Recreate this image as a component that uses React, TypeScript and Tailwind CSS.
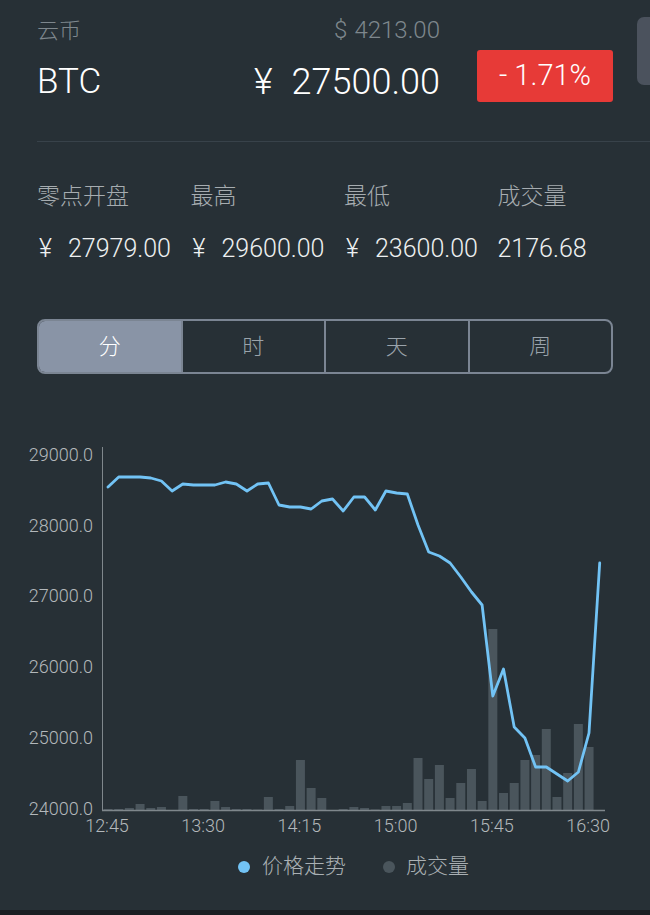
const prices = [
  487, 477, 477, 477, 478, 481, 491, 484, 485, 485, 485, 482, 484, 491, 484, 483,
  505, 507, 507, 509, 501, 499, 511, 497, 497, 510, 491, 493, 494, 525, 552, 556,
  563, 577, 592, 605, 696, 669, 727, 738, 767, 767, 774, 781, 772, 733, 563,
];

const volumes = [
  1, 1, 2, 6, 2, 3, 0, 14, 1, 1, 9, 3, 1, 1, 0.5, 13, 1, 4, 50, 22, 12, 0, 1, 3,
  2, 0.5, 4, 4, 7, 52, 31, 45, 12, 27, 41, 9, 181, 17, 27, 50, 55, 81, 13, 37, 86,
  63, 0,
];

const stats = [
  { label: "零点开盘", value: "27979.00", yen: true },
  { label: "最高", value: "29600.00", yen: true },
  { label: "最低", value: "23600.00", yen: true },
  { label: "成交量", value: "2176.68", yen: false },
];

const tabs = ["分", "时", "天", "周"];

const yTicks = [29000, 28000, 27000, 26000, 25000, 24000];
const xTicks = ["12:45", "13:30", "14:15", "15:00", "15:45", "16:30"];

const STEP = 10.69;
const X0 = 108;
// chart svg starts at y=440 of the page
const OFF = 440;

function PriceChart() {
  const pts = prices
    .map((y, i) => `${(X0 + i * STEP).toFixed(1)},${y - OFF}`)
    .join(" ");

  return (
    <svg width={650} height={395} className="block">
      {volumes.map((h, i) =>
        h > 0 ? (
          <rect
            key={i}
            x={X0 + i * STEP - 4.5}
            y={370 - h}
            width={9}
            height={h}
            fill="#4a555c"
          />
        ) : null
      )}
      <line x1={102.5} y1={7} x2={102.5} y2={371} stroke="#7f878c" strokeWidth={1} />
      <line x1={102} y1={370.5} x2={605} y2={370.5} stroke="#7f878c" strokeWidth={1.5} />
      <polyline
        points={pts}
        fill="none"
        stroke="#72c3f5"
        strokeWidth={2.8}
        strokeLinejoin="round"
        strokeLinecap="round"
      />
      {yTicks.map((v) => (
        <text
          key={v}
          x={93}
          y={370 - (v - 24000) * 0.0708}
          textAnchor="end"
          dominantBaseline="middle"
          fill="#b3b8bb"
          fontSize={18}
        >
          {v.toFixed(1)}
        </text>
      ))}
      {xTicks.map((t, i) => (
        <text
          key={t}
          x={X0 + i * 9 * STEP - 1}
          y={387}
          textAnchor="middle"
          dominantBaseline="middle"
          fill="#b3b8bb"
          fontSize={18}
        >
          {t}
        </text>
      ))}
    </svg>
  );
}

export default function App() {
  return (
    <div className="relative flex h-[915px] w-[650px] flex-col overflow-hidden bg-[#273036] font-['Roboto','Noto_Sans_CJK_SC',sans-serif] font-light">
      {/* side handle peeking in at the top right */}
      <div className="absolute right-0 top-[17px] h-[68px] w-[13px] rounded-l-[7px] bg-[#4b525d]" />

      <div className="flex h-[141px] pl-[37px] pt-[14px]">
        <div className="flex w-[403px] flex-col">
          <div className="flex h-[32px] items-center justify-between">
            <span className="text-[22px] text-[#7e878d]">云币</span>
            <span className="text-[24px] text-[#7e878d]">
              <span className="mr-[7px]">$</span>4213.00
            </span>
          </div>
          <div className="mt-[11px] flex h-[50px] items-center justify-between">
            <span className="text-[35px] text-white">BTC</span>
            <span className="text-[36px] text-white">
              <span className="mr-[19px]">¥</span>27500.00
            </span>
          </div>
        </div>
        <div className="ml-[37px] mt-[36px] flex h-[52px] w-[136px] items-center justify-center rounded-[3px] bg-[#e73a37] text-[29px] text-white">
          - 1.71%
        </div>
      </div>
      <div className="ml-[37px] h-px bg-[#38424a]" />

      <div className="mt-[40px] grid w-[651px] grid-cols-4 pl-[37px]">
        {stats.map((s) => (
          <div key={s.label} className="flex h-[30px] items-center text-[23px] text-[#a6acb0]">
            {s.label}
          </div>
        ))}
      </div>
      <div className="mt-[22px] grid w-[651px] grid-cols-4 pl-[37px]">
        {stats.map((s) => (
          <div key={s.label} className="flex h-[30px] items-center text-[25px] text-[#eef0f1]">
            {s.yen && <span className="ml-[2px] mr-[16px]">¥</span>}
            {s.value}
          </div>
        ))}
      </div>

      <div className="ml-[37px] mt-[55px] flex h-[55px] w-[576px] overflow-hidden rounded-[8px] border-2 border-[#7b8593]">
        {tabs.map((t, i) => (
          <div
            key={t}
            className={
              i === 0
                ? "flex flex-1 items-center justify-center bg-[#8994a6] text-[22px] text-white"
                : "flex flex-1 items-center justify-center border-l-2 border-[#7b8593] text-[22px] text-[#9aa3ab]"
            }
          >
            {t}
          </div>
        ))}
      </div>

      <div className="mt-[66px]">
        <PriceChart />
      </div>

      <div className="mt-[20px] flex h-[24px] items-center pl-[238px] text-[21px] text-[#aab0b4]">
        <span className="h-[12px] w-[12px] rounded-full bg-[#72c3f5]" />
        <span className="ml-[12px]">价格走势</span>
        <span className="ml-[37px] h-[12px] w-[12px] rounded-full bg-[#4a555c]" />
        <span className="ml-[11px]">成交量</span>
      </div>

      <div className="mt-auto h-[5px] bg-[#1b1f23]" />
    </div>
  );
}
